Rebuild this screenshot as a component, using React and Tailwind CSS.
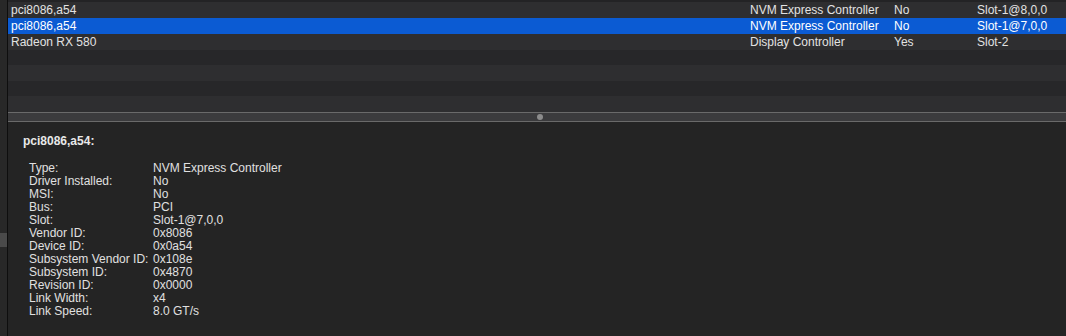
import React from 'react'

const rows = [
  { name: 'pci8086,a54', type: 'NVM Express Controller', driver: 'No', slot: 'Slot-1@8,0,0' },
  { name: 'pci8086,a54', type: 'NVM Express Controller', driver: 'No', slot: 'Slot-1@7,0,0', selected: true },
  { name: 'Radeon RX 580', type: 'Display Controller', driver: 'Yes', slot: 'Slot-2' },
]

const details = [
  ['Type:', 'NVM Express Controller'],
  ['Driver Installed:', 'No'],
  ['MSI:', 'No'],
  ['Bus:', 'PCI'],
  ['Slot:', 'Slot-1@7,0,0'],
  ['Vendor ID:', '0x8086'],
  ['Device ID:', '0x0a54'],
  ['Subsystem Vendor ID:', '0x108e'],
  ['Subsystem ID:', '0x4870'],
  ['Revision ID:', '0x0000'],
  ['Link Width:', 'x4'],
  ['Link Speed:', '8.0 GT/s'],
]

function Row({ row, index }) {
  const bg = row.selected ? 'bg-[#0b5bd3] text-white' : index % 2 === 0 ? 'bg-[#2e2e30] text-[#e2e2e2]' : 'bg-[#272729] text-[#e2e2e2]'
  return (
    <div className={`flex h-[16px] items-center leading-[16px] ${bg}`}>
      <div className="w-[739px] pl-[3px]">{row.name}</div>
      <div className="w-[144px] pl-[3px]">{row.type}</div>
      <div className="w-[83px] pl-[3px]">{row.driver}</div>
      <div className="flex-1 pl-[3px]">{row.slot}</div>
    </div>
  )
}

export default function App() {
  return (
    <div
      className="flex h-[336px] w-[1066px] overflow-hidden bg-[#252525] text-[12px]"
      style={{ fontFamily: '"Liberation Sans", Arial, sans-serif' }}
    >
      {/* sidebar edge */}
      <div className="flex w-[7px] flex-col bg-[#282828]">
        <div className="h-[233px]" />
        <div className="h-[14px] bg-[#4a4a4a]" />
      </div>
      <div className="w-px bg-[#0e0e0e]" />

      <div className="flex flex-1 flex-col">
        {/* device table */}
        <div className="flex h-[112px] flex-col overflow-hidden bg-[#272729]">
          <div className="h-[2px] bg-[#232325]" />
          {rows.map((r, i) => (
            <Row key={i} row={r} index={i} />
          ))}
          <div className="h-[16px] bg-[#272729]" />
          <div className="h-[16px] bg-[#2e2e30]" />
          <div className="h-[16px] bg-[#272729]" />
          <div className="h-[16px] bg-[#2e2e30]" />
        </div>

        {/* split divider */}
        <div className="flex h-[10px] items-center justify-center border-y border-[#6a6a6a] bg-[#3b3b3d]">
          <div className="ml-[6px] h-[6px] w-[6px] rounded-full bg-[#8c8c8c]" />
        </div>

        {/* detail pane */}
        <div className="flex-1 bg-[#242424] pl-[15px] pt-[12px] text-[#e0e0e0]">
          <div className="h-[14px] font-bold leading-[14px] text-[#e8e8e8]">pci8086,a54:</div>
          <div className="mt-[14px] pl-[6px]">
            {details.map(([k, v]) => (
              <div key={k} className="flex h-[13px] leading-[13px]">
                <div className="w-[124px]">{k}</div>
                <div>{v}</div>
              </div>
            ))}
          </div>
        </div>
      </div>
    </div>
  )
}
